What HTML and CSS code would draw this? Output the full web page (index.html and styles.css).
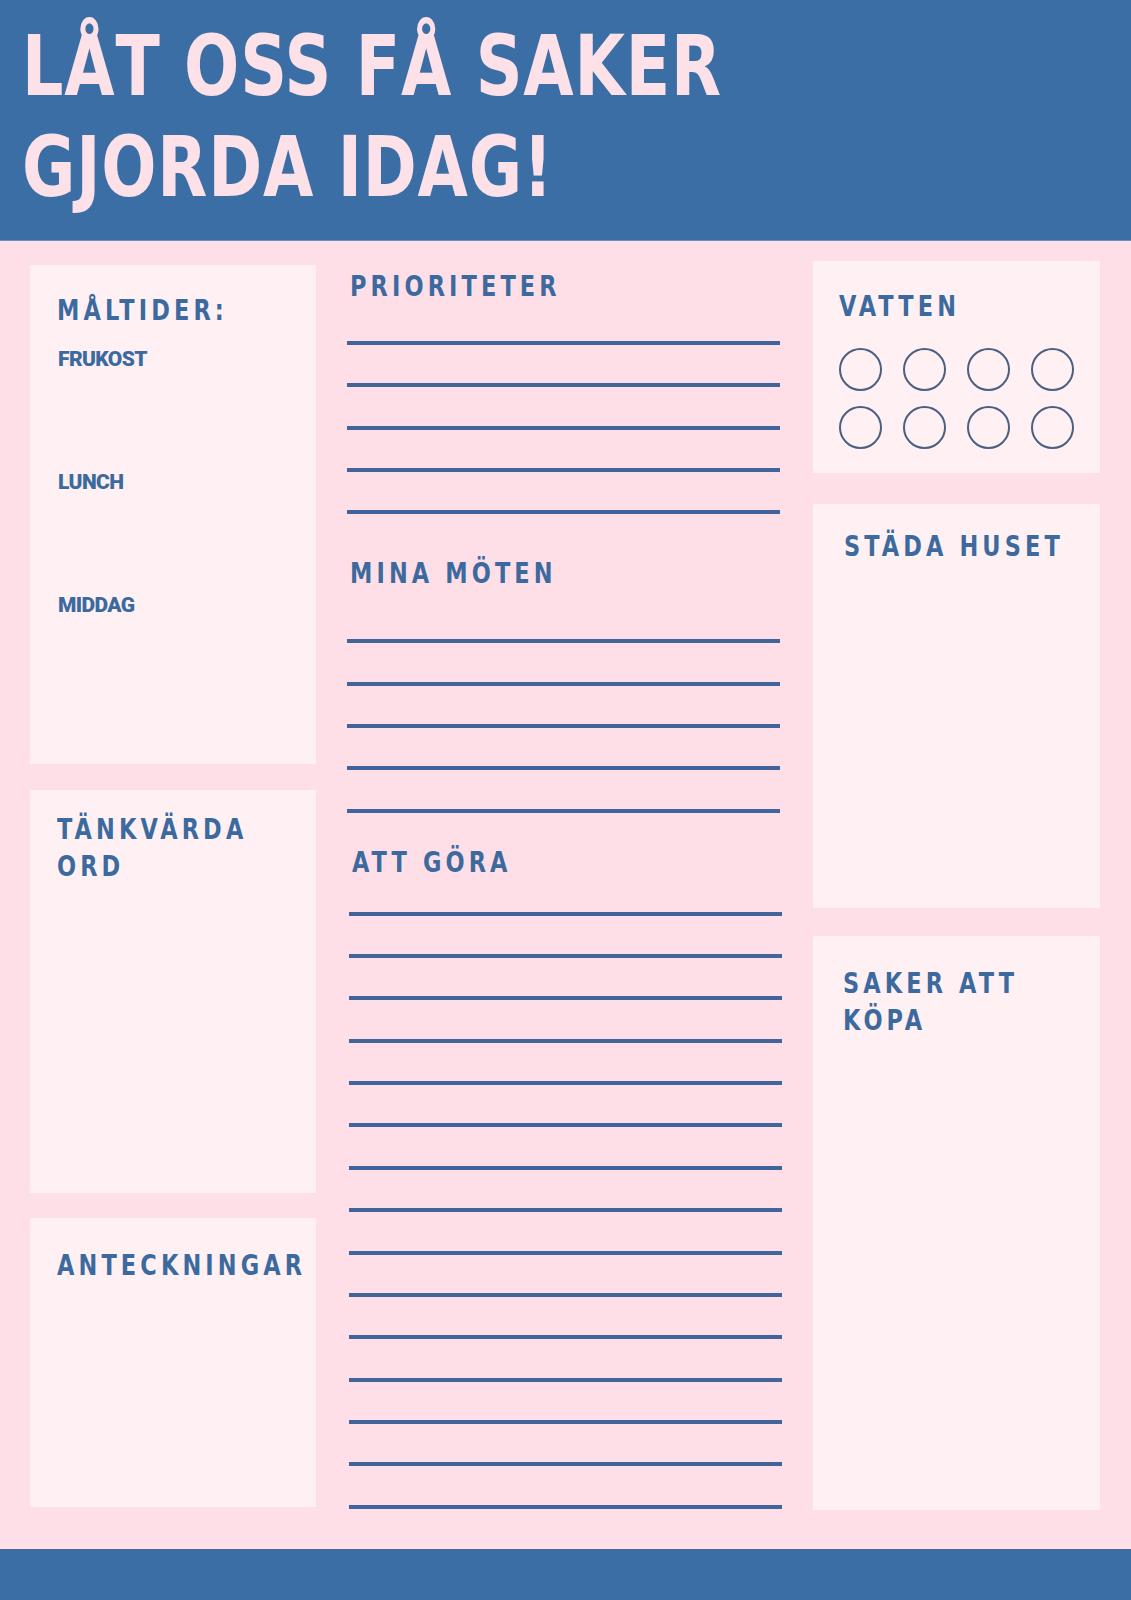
FILE: index.html
```html
<!DOCTYPE html>
<html lang="sv">
<head>
<meta charset="utf-8">
<title>Låt oss få saker gjorda idag!</title>
<link rel="stylesheet" href="styles.css">
</head>
<body>
<header class="top">
  <h1 class="title">LÅT OSS FÅ SAKER<br>GJORDA IDAG!</h1>
</header>
<main class="board">
  <div class="col col-left">
    <section class="card card-meals">
      <h2 class="head">MÅLTIDER:</h2>
      <ul class="meals">
        <li class="meal">FRUKOST</li>
        <li class="meal">LUNCH</li>
        <li class="meal">MIDDAG</li>
      </ul>
    </section>
    <section class="card card-words">
      <h2 class="head head-multi">TÄNKVÄRDA<br>ORD</h2>
    </section>
    <section class="card card-notes">
      <h2 class="head">ANTECKNINGAR</h2>
    </section>
  </div>
  <div class="col col-mid">
    <section class="list list-prio">
      <h2 class="head">PRIORITETER</h2>
      <div class="rules">
        <div class="rule"></div><div class="rule"></div><div class="rule"></div><div class="rule"></div><div class="rule"></div>
      </div>
    </section>
    <section class="list list-meet">
      <h2 class="head">MINA MÖTEN</h2>
      <div class="rules">
        <div class="rule"></div><div class="rule"></div><div class="rule"></div><div class="rule"></div><div class="rule"></div>
      </div>
    </section>
    <section class="list list-todo">
      <h2 class="head">ATT GÖRA</h2>
      <div class="rules">
        <div class="rule"></div><div class="rule"></div><div class="rule"></div><div class="rule"></div><div class="rule"></div>
        <div class="rule"></div><div class="rule"></div><div class="rule"></div><div class="rule"></div><div class="rule"></div>
        <div class="rule"></div><div class="rule"></div><div class="rule"></div><div class="rule"></div><div class="rule"></div>
      </div>
    </section>
  </div>
  <div class="col col-right">
    <section class="card card-water">
      <h2 class="head">VATTEN</h2>
      <div class="glasses">
        <span class="glass"></span><span class="glass"></span><span class="glass"></span><span class="glass"></span>
        <span class="glass"></span><span class="glass"></span><span class="glass"></span><span class="glass"></span>
      </div>
    </section>
    <section class="card card-clean">
      <h2 class="head">STÄDA HUSET</h2>
    </section>
    <section class="card card-buy">
      <h2 class="head head-multi">SAKER ATT<br>KÖPA</h2>
    </section>
  </div>
</main>
<footer class="bottom"></footer>
</body>
</html>
```

FILE: styles.css
```css
* { box-sizing: border-box; }

html, body {
  margin: 0;
  padding: 0;
}

body {
  width: 1131px;
  background: #fedfe7;
  font-family: "DejaVu Sans Condensed", "DejaVu Sans", sans-serif;
}

.top {
  height: 241px;
  background: #3b6ea5;
  padding: 16px 0 0 22px;
  border-bottom: 1px solid #6a8fbf;
}

.title {
  margin: 0;
  font-family: "DejaVu Sans Condensed", "DejaVu Sans", sans-serif;
  font-weight: 700;
  font-size: 84px;
  line-height: 101px;
  color: #fde1e9;
  letter-spacing: 1px;
  transform: scaleX(0.86);
  transform-origin: 0 0;
}

.board {
  height: 1308px;
  padding: 20px 31px 0 30px;
  display: grid;
  grid-template-columns: 286px 1fr 287px;
  column-gap: 31px;
  align-items: start;
}

.col {
  display: flex;
  flex-direction: column;
}

.col-left { padding-top: 4px; }

.card {
  background: #fff0f4;
}

.head {
  margin: 0;
  font-family: "DejaVu Sans Condensed", "DejaVu Sans", sans-serif;
  font-weight: 700;
  font-size: 29px;
  line-height: 29px;
  letter-spacing: 4.8px;
  color: #3c6a9f;
  transform: scaleX(0.86);
  transform-origin: 0 0;
  white-space: nowrap;
}

.head-multi { line-height: 37px; }

/* left column */
.card-meals {
  height: 499px;
  padding: 31px 0 0 27px;
}

.meals {
  list-style: none;
  margin: 24px 0 0 0;
  padding: 0 0 0 1px;
}

.meal {
  font-family: Roboto, "Open Sans", sans-serif;
  font-weight: 900;
  font-size: 21px;
  line-height: 20px;
  letter-spacing: -0.6px;
  color: #3c6a9f;
  margin-bottom: 103px;
}

.card-words {
  margin-top: 26px;
  height: 403px;
  padding: 21px 0 0 27px;
}

.card-notes {
  margin-top: 25px;
  height: 289px;
  padding: 33px 0 0 27px;
}

/* middle column */
.col-mid { padding-top: 11px; }

.list .head { margin-left: 3px; }

.rules {
  display: flex;
  flex-direction: column;
  gap: 38.35px;
}

.rule {
  height: 4px;
  width: 433px;
  background: #41659b;
}

.list-prio .rules { margin-top: 40px; }

.list-meet { margin-top: 45px; }
.list-meet .rules { margin-top: 51px; }

.list-todo { margin-top: 35px; padding-left: 2px; }
.list-todo .rules { margin-top: 35px; }

/* right column */
.card-water {
  height: 212px;
  padding: 31px 0 0 26px;
}

.glasses {
  margin-top: 26.5px;
  display: grid;
  grid-template-columns: repeat(4, 43px);
  column-gap: 21px;
  row-gap: 15px;
}

.glass {
  width: 43px;
  height: 43px;
  border: 2px solid #4b5f80;
  border-radius: 50%;
}

.card-clean {
  margin-top: 31px;
  height: 404px;
  padding: 28px 0 0 31px;
}

.card-buy {
  margin-top: 28px;
  height: 574px;
  padding: 29px 0 0 30px;
}

.bottom {
  height: 51px;
  background: #3b6ea5;
  border-top: 1px solid #4b6a93;
}
```
